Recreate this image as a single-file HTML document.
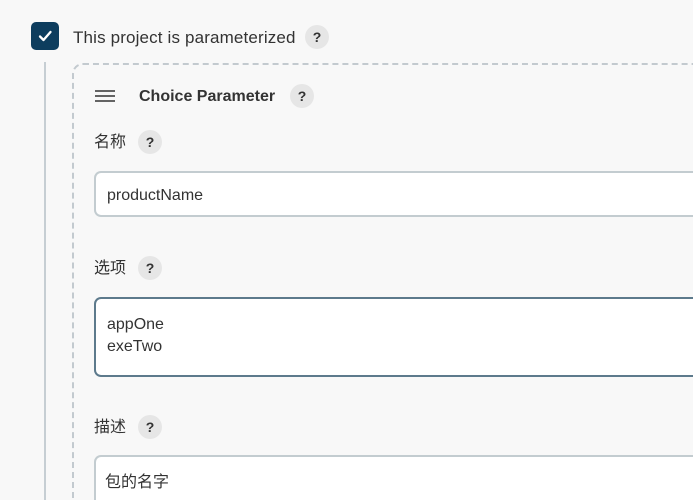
<!DOCTYPE html>
<html style="overflow:hidden;height:500px"><head><meta charset="utf-8"><style>
body{margin:0;width:693px;height:500px;overflow:hidden;background:#f8f8f8;font-family:"Liberation Sans","Noto Sans CJK SC",sans-serif;color:#333}
#w{position:relative;width:693px;height:500px;overflow:hidden}
.a{position:absolute}
.help{position:absolute;width:24px;height:24px;border-radius:50%;background:#e6e6e6;font-weight:bold;font-size:14px;text-align:center;line-height:24px;color:#333}
.lbl{position:absolute;font-size:16px;line-height:20px}
.inp{position:absolute;left:94px;width:610px;background:#fff;border:2px solid #c3ccd0;border-right:none;border-radius:7px 0 0 7px;box-sizing:border-box;font-size:16px;color:#333}
</style></head><body><div id="w">
<div class="a" style="left:31px;top:22px;width:28px;height:28px;background:#0d3d5e;border-radius:5px"></div>
<svg class="a" style="left:31px;top:22px" width="28" height="28"><path d="M9 14.5l3.5 3.5 7-8" stroke="#fff" stroke-width="2.3" fill="none" stroke-linecap="round" stroke-linejoin="round"/></svg>
<div class="lbl" style="left:73px;top:28px;font-size:17px;letter-spacing:0.15px">This project is parameterized</div>
<div class="help" style="left:305px;top:25px">?</div>
<div class="a" style="left:44px;top:62px;width:2px;height:438px;background:#c6ced3"></div>
<div class="a" style="left:72px;top:63px;width:640px;height:437px;border:2px dashed #c3cacf;border-right:none;border-bottom:none;border-radius:11px 0 0 0;box-sizing:border-box"></div>
<svg class="a" style="left:95px;top:89px" width="20" height="14"><path d="M0 2h20M0 7h20M0 12h20" stroke="#333" stroke-width="1.6"/></svg>
<div class="lbl" style="left:139px;top:87px;font-weight:bold">Choice Parameter</div>
<div class="help" style="left:290px;top:84px">?</div>
<div class="lbl" style="left:94px;top:133px">名称</div>
<div class="help" style="left:138px;top:130px">?</div>
<div class="inp" style="top:171px;height:46px;padding:14px 0 0 11px">productName</div>
<div class="lbl" style="left:94px;top:259px">选项</div>
<div class="help" style="left:138px;top:256px">?</div>
<div class="inp" style="top:297px;height:80px;border-color:#5d7a8c;padding:15px 0 0 11px;line-height:22px">appOne<br>exeTwo</div>
<div class="lbl" style="left:94px;top:418px">描述</div>
<div class="help" style="left:138px;top:415px">?</div>
<div class="inp" style="top:455px;height:45px;border-bottom:none;border-radius:7px 0 0 0;padding:11px 0 0 9px">包的名字</div>
</div></body></html>
